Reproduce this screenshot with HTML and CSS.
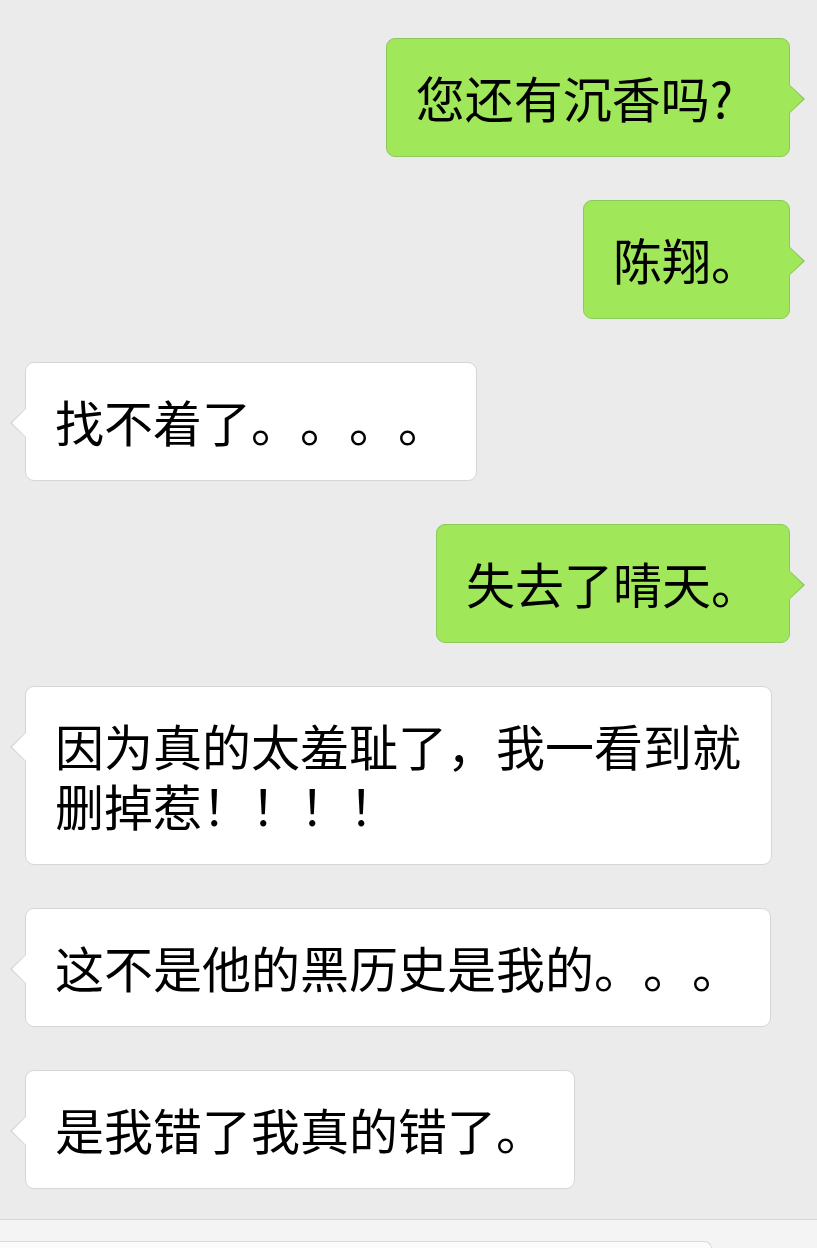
FILE: index.html
```html
<!DOCTYPE html>
<html lang="zh">
<head>
<meta charset="utf-8">
<title>聊天</title>
<link rel="stylesheet" href="styles.css">
</head>
<body>
<div class="chat">
  <div class="row row-right"><div class="bubble bubble-green bubble-tailspace">您还有沉香吗?</div></div>
  <div class="row row-right"><div class="bubble bubble-green">陈翔。</div></div>
  <div class="row row-left"><div class="bubble bubble-white">找不着了。。。。</div></div>
  <div class="row row-right"><div class="bubble bubble-green">失去了晴天。</div></div>
  <div class="row row-left"><div class="bubble bubble-white">因为真的太羞耻了，我一看到就删掉惹！！！！</div></div>
  <div class="row row-left"><div class="bubble bubble-white">这不是他的黑历史是我的。。。</div></div>
  <div class="row row-left"><div class="bubble bubble-white">是我错了我真的错了。</div></div>
</div>
<div class="footer"><div class="input"></div></div>
</body>
</html>
```

FILE: styles.css
```css
html, body {
  margin: 0;
  padding: 0;
  background: #ebebeb;
  height: 1248px;
  overflow: hidden;
}
body {
  font-family: "Noto Sans CJK SC", "Noto Sans", sans-serif;
  color: #000;
}
.chat {
  display: flex;
  flex-direction: column;
  gap: 43px;
  padding: 38px 27px 0 25px;
}
.row {
  display: flex;
}
.row-right {
  justify-content: flex-end;
}
.row-left {
  justify-content: flex-start;
}
.bubble {
  position: relative;
  box-sizing: border-box;
  max-width: 747px;
  font-size: 49px;
  line-height: 60px;
  padding: 28px 29px 29px 29px;
  border-radius: 9px;
  border: 1px solid;
  word-break: break-all;
  text-spacing-trim: space-all;
  font-feature-settings: "halt" 0, "chws" 0, "palt" 0;
}
.bubble-tailspace {
  padding-right: 56px;
}
.bubble-green {
  background: #a0e75a;
  border-color: #8dc85c;
}
.bubble-white {
  background: #ffffff;
  border-color: #d6d6d6;
}
.bubble::before,
.bubble::after {
  content: "";
  position: absolute;
  top: 46px;
  width: 0;
  height: 0;
  border-top: 14px solid transparent;
  border-bottom: 14px solid transparent;
}
.bubble-green::before {
  right: -16px;
  border-left: 15px solid #8dc85c;
}
.bubble-green::after {
  right: -14px;
  border-left: 14px solid #a0e75a;
}
.bubble-white::before {
  left: -16px;
  border-right: 15px solid #d6d6d6;
}
.bubble-white::after {
  left: -14px;
  border-right: 14px solid #ffffff;
}
.footer {
  margin-top: 30px;
  border-top: 1px solid #d8d8d8;
  background: #f4f4f4;
  padding-top: 21px;
  height: 40px;
}
.input {
  width: 711px;
  height: 20px;
  background: #fbfbfb;
  border-top: 1px solid #dadada;
  border-right: 1px solid #dadada;
  border-top-right-radius: 8px;
}
```
